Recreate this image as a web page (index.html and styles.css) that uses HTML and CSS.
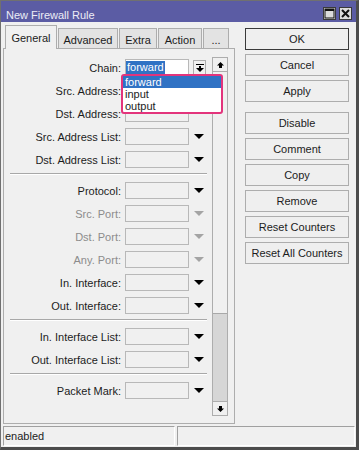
FILE: index.html
```html
<!DOCTYPE html>
<html lang="en">
<head>
    <meta charset="UTF-8">
    <title>New Firewall Rule</title>
    <link rel="stylesheet" href="styles.css">
</head>
<body>
<div class="window">
    <div class="titlebar">
        <span class="title">New Firewall Rule</span>
        <div class="title-btns">
            <span class="tbtn">
                <svg width="11" height="11" viewBox="0 0 11 11"><rect x="1" y="1" width="9" height="9" fill="none" stroke="#111" stroke-width="1"/><rect x="1" y="1" width="9" height="2" fill="#111"/></svg>
            </span>
            <span class="tbtn">
                <svg width="11" height="11" viewBox="0 0 11 11"><path d="M2 2L9 9M9 2L2 9" stroke="#111" stroke-width="2"/></svg>
            </span>
        </div>
    </div>

    <div class="main">
        <div class="left">
            <!-- Tabs -->
            <div class="tabs">
                <div class="tab active" style="width:52px">General</div>
                <div class="tab" style="width:60px">Advanced</div>
                <div class="tab" style="width:38px">Extra</div>
                <div class="tab" style="width:44px">Action</div>
                <div class="tab" style="width:26px">...</div>
            </div>

            <div class="panel">
                <div class="form">
                    <div class="row">
                        <label>Chain:</label>
                        <div class="field chain">
                            <span class="sel">forward</span>
                            <div class="popup">
                                <div class="item hl">forward</div>
                                <div class="item">input</div>
                                <div class="item">output</div>
                            </div>
                        </div>
                        <span class="dd-btn">
                            <svg width="8" height="8" viewBox="0 0 8 8"><rect x="0" y="0" width="8" height="1" fill="#000"/><rect x="3" y="2" width="2" height="2" fill="#000"/><path d="M0 4H8L4 8Z" fill="#000"/></svg>
                        </span>
                    </div>
                    <div class="row"><label>Src. Address:</label><div class="field"></div></div>
                    <div class="row"><label>Dst. Address:</label><div class="field"></div></div>
                    <div class="row"><label>Src. Address List:</label><div class="field"></div><span class="arrow"></span></div>
                    <div class="row"><label>Dst. Address List:</label><div class="field"></div><span class="arrow"></span></div>
                    <div class="sep"></div>

                    <div class="row"><label>Protocol:</label><div class="field"></div><span class="arrow"></span></div>
                    <div class="row off"><label>Src. Port:</label><div class="field"></div><span class="arrow"></span></div>
                    <div class="row off"><label>Dst. Port:</label><div class="field"></div><span class="arrow"></span></div>
                    <div class="row off"><label>Any. Port:</label><div class="field"></div><span class="arrow"></span></div>
                    <div class="row"><label>In. Interface:</label><div class="field"></div><span class="arrow"></span></div>
                    <div class="row"><label>Out. Interface:</label><div class="field"></div><span class="arrow"></span></div>
                    <div class="sep"></div>

                    <div class="row"><label>In. Interface List:</label><div class="field"></div><span class="arrow"></span></div>
                    <div class="row"><label>Out. Interface List:</label><div class="field"></div><span class="arrow"></span></div>
                    <div class="sep"></div>

                    <div class="row"><label>Packet Mark:</label><div class="field"></div><span class="arrow"></span></div>
                </div>

                <div class="scroll">
                    <div class="sbtn">
                        <svg width="7" height="6" viewBox="0 0 7 6"><path d="M3.5 0L7 3.5H5V6H2V3.5H0Z" fill="#000"/></svg>
                    </div>
                    <div class="track"><div class="thumb"></div></div>
                    <div class="sbtn">
                        <svg width="7" height="6" viewBox="0 0 7 6"><path d="M3.5 6L7 2.5H5V0H2V2.5H0Z" fill="#000"/></svg>
                    </div>
                </div>
            </div>
        </div>

        <div class="buttons">
            <div class="btn default">OK</div>
            <div class="btn">Cancel</div>
            <div class="btn">Apply</div>
            <div class="btn gap">Disable</div>
            <div class="btn">Comment</div>
            <div class="btn">Copy</div>
            <div class="btn">Remove</div>
            <div class="btn">Reset Counters</div>
            <div class="btn">Reset All Counters</div>
        </div>
    </div>

    <div class="statusbar">
        <div class="pane first">enabled</div>
        <div class="pane"></div>
    </div>
</div>
</body>
</html>
```

FILE: styles.css
```css
* {
    box-sizing: border-box;
}
body {
    margin: 0;
    font-family: "Liberation Sans", Arial, sans-serif;
    font-size: 11px;
    color: #1c1c1c;
    background: #f0f0f0;
}
.window {
    width: 359px;
    height: 450px;
    background: #f0f0f0;
    border: 1px solid #707070;
    border-right: 3px solid #4c4c4c;
    border-bottom: 3px solid #4c4c4c;
    display: flex;
    flex-direction: column;
}

/* title bar */
.titlebar {
    height: 21px;
    flex: none;
    background: #5b5ca4;
    color: #ececf6;
    display: flex;
    align-items: flex-start;
    justify-content: space-between;
    padding: 7px 4px 0 5px;
}
.title {
    line-height: 14px;
}
.title-btns {
    display: flex;
    gap: 3px;
    margin-top: -1px;
}
.tbtn {
    width: 13px;
    height: 13px;
    background: #dcdcdc;
    border: 1px solid #3a3a3a;
    display: flex;
    align-items: center;
    justify-content: center;
}

.main {
    display: flex;
    height: 402px;
    flex: none;
    padding: 3px 0 0 2px;
}
.left {
    width: 232px;
}

/* tabs */
.tabs {
    display: flex;
    align-items: flex-end;
    height: 23px;
    padding-left: 2px;
}
.tab {
    height: 20px;
    margin-left: 1px;
    padding-top: 2px;
    border: 1px solid #adadad;
    border-bottom: none;
    background: #e3e3e3;
    display: flex;
    align-items: center;
    justify-content: center;
}
.tab.active {
    height: 24px;
    margin-left: 0;
    margin-bottom: -1px;
    padding-top: 0;
    background: #f0f0f0;
    position: relative;
    z-index: 1;
}

.panel {
    height: 376px;
    border: 1px solid #adadad;
    display: flex;
    padding: 8px 6px 7px 0;
}
.form {
    flex: 1;
    padding-top: 2px;
}
.row {
    display: flex;
    align-items: center;
    height: 17px;
    margin-bottom: 6px;
}
.row label {
    width: 117px;
    text-align: right;
    white-space: nowrap;
}
.field {
    width: 64px;
    height: 17px;
    margin-left: 4px;
    border: 1px solid #b8b8b8;
    background: #f0f0f0;
}
.arrow {
    width: 0;
    height: 0;
    margin-left: 5px;
    border-left: 5px solid transparent;
    border-right: 5px solid transparent;
    border-top: 5px solid #000;
}
.row.off label {
    color: #8c8c8c;
}
.row.off .arrow {
    border-top-color: #a4a4a4;
}
.sep {
    width: 197px;
    height: 2px;
    margin: -1px 0 7px 6px;
    border-top: 1px solid #a8a8a8;
    border-bottom: 1px solid #fff;
}

/* chain select */
.field.chain {
    position: relative;
    background: #fff;
    padding: 1px 0 0 0;
}
.sel {
    display: inline-block;
    background: #3072c4;
    color: #fff;
    line-height: 13px;
    padding: 0 1px;
}
.dd-btn {
    width: 13px;
    height: 16px;
    margin-left: 4px;
    border: 1px solid #adadad;
    display: flex;
    align-items: center;
    justify-content: center;
}
.popup {
    position: absolute;
    left: -5px;
    top: 14px;
    width: 102px;
    border: 2px solid #e3347c;
    border-radius: 3px;
    background: #fff;
    z-index: 5;
}
.item {
    height: 12px;
    line-height: 12px;
    padding-left: 2px;
}
.item.hl {
    background: #3072c4;
    color: #fff;
}

/* scrollbar */
.scroll {
    width: 16px;
    display: flex;
    flex-direction: column;
}
.sbtn {
    height: 15px;
    border: 1px solid #adadad;
    display: flex;
    align-items: center;
    justify-content: center;
}
.track {
    flex: 1;
    border-left: 1px solid #adadad;
    border-right: 1px solid #adadad;
    display: flex;
    flex-direction: column;
    justify-content: flex-end;
}
.thumb {
    height: 88px;
    background: #d6d6d6;
    border-top: 1px solid #a8a8a8;
}

/* buttons */
.buttons {
    width: 104px;
    margin-left: 10px;
    padding-top: 3px;
    display: flex;
    flex-direction: column;
}
.btn {
    height: 22px;
    margin-bottom: 4px;
    border: 1px solid #adadad;
    background: #efefef;
    display: flex;
    align-items: center;
    justify-content: center;
    white-space: nowrap;
}
.btn.default {
    border-color: #3a3a3a;
}
.btn.gap {
    margin-top: 6px;
}

/* status */
.statusbar {
    display: flex;
    gap: 2px;
    height: 20px;
    margin-top: 2px;
    padding: 0 1px 0 2px;
}
.pane {
    flex: 1;
    border-top: 1px solid #a0a0a0;
    border-left: 1px solid #a0a0a0;
    border-bottom: 1px solid #fff;
    border-right: 1px solid #fff;
    padding-left: 1px;
    line-height: 18px;
}
.pane.first {
    flex: none;
    width: 172px;
}
```
